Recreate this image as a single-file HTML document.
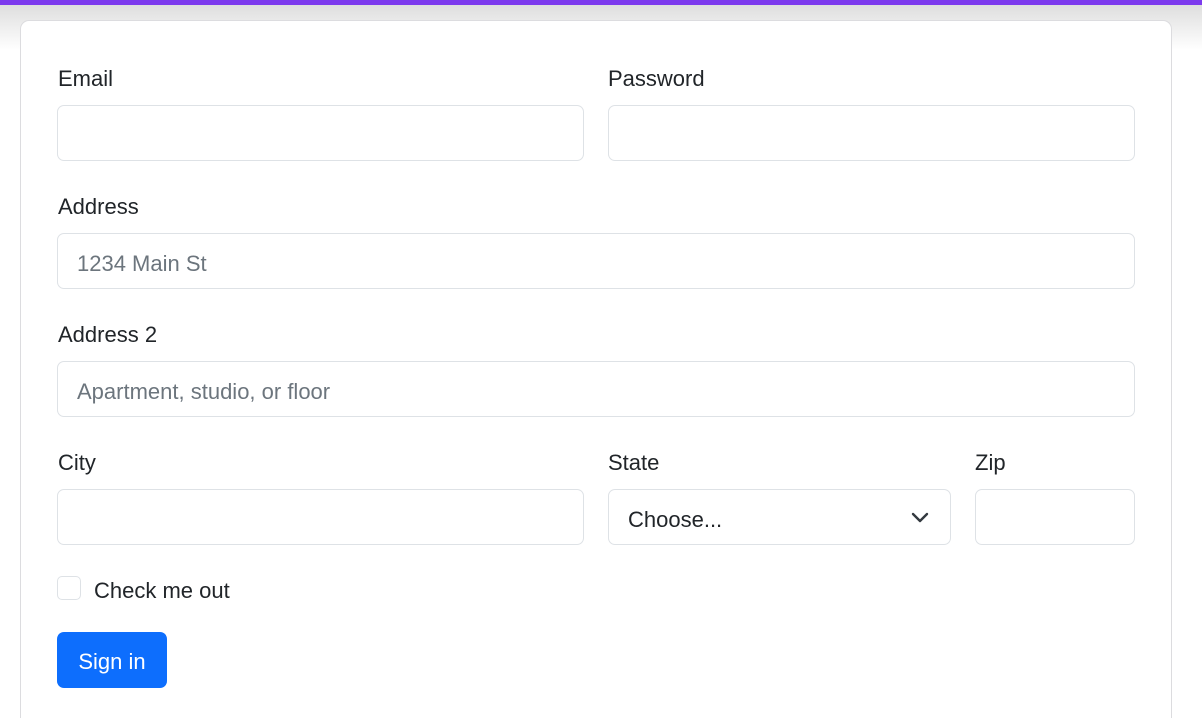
<!DOCTYPE html>
<html><head><meta charset="utf-8"><style>
html,body{margin:0;padding:0;width:1202px;height:718px;overflow:hidden;background:#fff;font-family:"Liberation Sans",sans-serif;color:#212529}
.bar{position:absolute;left:0;top:0;width:1202px;height:5px;background:#7c3aed}
.grad{position:absolute;left:0;top:5px;width:1202px;height:45px;background:linear-gradient(#dedede,#fff)}
.card{position:absolute;left:20px;top:20px;width:1152px;height:698px;border:1px solid #dcdcdf;border-bottom:none;border-radius:9px 9px 0 0;background:#fff;box-sizing:border-box}
.lbl{position:absolute;font-size:22px;line-height:32px}
.in{position:absolute;height:56px;border:1px solid #dee2e6;border-radius:7px;box-sizing:border-box;background:#fff;font-size:22px;line-height:60px;padding-left:19px;color:#6c757d}
.btn{position:absolute;left:57px;top:632px;width:110px;height:56px;background:#0d6efd;border-radius:7px;color:#fff;font-size:22px;line-height:60px;text-align:center}
.cb{position:absolute;left:57px;top:576px;width:24px;height:24px;border:1px solid #dee2e6;border-radius:5px;box-sizing:border-box}
</style></head><body>
<div class="grad"></div><div class="bar"></div>
<div class="card"></div>
<div class="lbl" style="left:58px;top:63px">Email</div>
<div class="lbl" style="left:608px;top:63px">Password</div>
<div class="in" style="left:57px;top:105px;width:527px"></div>
<div class="in" style="left:608px;top:105px;width:527px"></div>
<div class="lbl" style="left:58px;top:191px">Address</div>
<div class="in" style="left:57px;top:233px;width:1078px">1234 Main St</div>
<div class="lbl" style="left:58px;top:319px">Address 2</div>
<div class="in" style="left:57px;top:361px;width:1078px">Apartment, studio, or floor</div>
<div class="lbl" style="left:58px;top:447px">City</div>
<div class="lbl" style="left:608px;top:447px">State</div>
<div class="lbl" style="left:975px;top:447px">Zip</div>
<div class="in" style="left:57px;top:489px;width:527px"></div>
<div class="in" style="left:608px;top:489px;width:343px;color:#212529">Choose...
<svg style="position:absolute;left:302px;top:21px" width="18" height="14" viewBox="0 0 18 14"><path d="M2 3l7 7 7-7" fill="none" stroke="#343a40" stroke-width="2.4" stroke-linecap="round" stroke-linejoin="round"/></svg></div>
<div class="in" style="left:975px;top:489px;width:160px"></div>
<div class="cb"></div>
<div class="lbl" style="left:94px;top:575px">Check me out</div>
<div class="btn">Sign in</div>
</body></html>
